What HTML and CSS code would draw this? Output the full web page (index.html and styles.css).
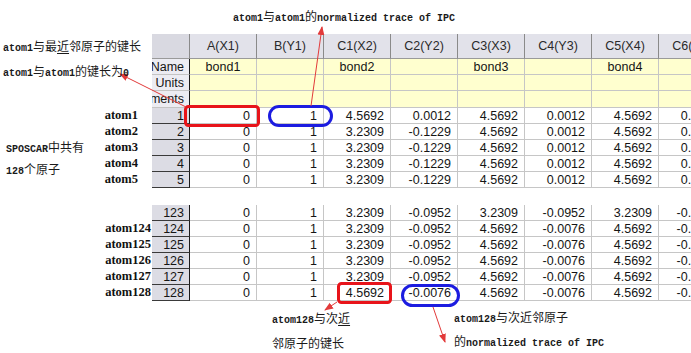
FILE: index.html
```html
<!DOCTYPE html>
<html lang="zh">
<head>
<meta charset="utf-8">
<title>atom bond table</title>
<link rel="stylesheet" href="styles.css">
</head>
<body>
<div class="page">
  <div class="sheet">
    <div class="grid grid1">
      <div class="lab"></div><div class="corner"></div>
      <div class="hd">A(X1)</div><div class="hd">B(Y1)</div><div class="hd">C1(X2)</div><div class="hd">C2(Y2)</div><div class="hd">C3(X3)</div><div class="hd">C4(Y3)</div><div class="hd">C5(X4)</div><div class="hd">C6(Y4)</div>

      <div class="lab"></div><div class="rh meta">Name</div>
      <div class="c y">bond1</div><div class="c y"></div><div class="c y">bond2</div><div class="c y"></div><div class="c y">bond3</div><div class="c y"></div><div class="c y">bond4</div><div class="c y"></div>

      <div class="lab"></div><div class="rh meta">Units</div>
      <div class="c y"></div><div class="c y"></div><div class="c y"></div><div class="c y"></div><div class="c y"></div><div class="c y"></div><div class="c y"></div><div class="c y"></div>

      <div class="lab"></div><div class="rh meta">Comments</div>
      <div class="c y"></div><div class="c y"></div><div class="c y"></div><div class="c y"></div><div class="c y"></div><div class="c y"></div><div class="c y"></div><div class="c y"></div>

      <div class="lab">atom1</div><div class="rh">1</div>
      <div class="c n">0</div><div class="c n">1</div><div class="c n">4.5692</div><div class="c n">0.0012</div><div class="c n">4.5692</div><div class="c n">0.0012</div><div class="c n">4.5692</div><div class="c n">0.0012</div>

      <div class="lab">atom2</div><div class="rh">2</div>
      <div class="c n">0</div><div class="c n">1</div><div class="c n">3.2309</div><div class="c n">-0.1229</div><div class="c n">4.5692</div><div class="c n">0.0012</div><div class="c n">4.5692</div><div class="c n">0.0012</div>

      <div class="lab">atom3</div><div class="rh">3</div>
      <div class="c n">0</div><div class="c n">1</div><div class="c n">3.2309</div><div class="c n">-0.1229</div><div class="c n">4.5692</div><div class="c n">0.0012</div><div class="c n">4.5692</div><div class="c n">0.0012</div>

      <div class="lab">atom4</div><div class="rh">4</div>
      <div class="c n">0</div><div class="c n">1</div><div class="c n">3.2309</div><div class="c n">-0.1229</div><div class="c n">4.5692</div><div class="c n">0.0012</div><div class="c n">4.5692</div><div class="c n">0.0012</div>

      <div class="lab">atom5</div><div class="rh">5</div>
      <div class="c n">0</div><div class="c n">1</div><div class="c n">3.2309</div><div class="c n">-0.1229</div><div class="c n">4.5692</div><div class="c n">0.0012</div><div class="c n">4.5692</div><div class="c n">0.0012</div>
    </div>

    <div class="grid grid2">
      <div class="lab lab2"></div><div class="rh">123</div>
      <div class="c n">0</div><div class="c n">1</div><div class="c n">3.2309</div><div class="c n">-0.0952</div><div class="c n">3.2309</div><div class="c n">-0.0952</div><div class="c n">3.2309</div><div class="c n">-0.0952</div>

      <div class="lab lab2">atom124</div><div class="rh">124</div>
      <div class="c n">0</div><div class="c n">1</div><div class="c n">3.2309</div><div class="c n">-0.0952</div><div class="c n">4.5692</div><div class="c n">-0.0076</div><div class="c n">4.5692</div><div class="c n">-0.0076</div>

      <div class="lab lab2">atom125</div><div class="rh">125</div>
      <div class="c n">0</div><div class="c n">1</div><div class="c n">3.2309</div><div class="c n">-0.0952</div><div class="c n">4.5692</div><div class="c n">-0.0076</div><div class="c n">4.5692</div><div class="c n">-0.0076</div>

      <div class="lab lab2">atom126</div><div class="rh">126</div>
      <div class="c n">0</div><div class="c n">1</div><div class="c n">3.2309</div><div class="c n">-0.0952</div><div class="c n">4.5692</div><div class="c n">-0.0076</div><div class="c n">4.5692</div><div class="c n">-0.0076</div>

      <div class="lab lab2">atom127</div><div class="rh">127</div>
      <div class="c n">0</div><div class="c n">1</div><div class="c n">3.2309</div><div class="c n">-0.0952</div><div class="c n">4.5692</div><div class="c n">-0.0076</div><div class="c n">4.5692</div><div class="c n">-0.0076</div>

      <div class="lab lab2">atom128</div><div class="rh">128</div>
      <div class="c n">0</div><div class="c n">1</div><div class="c n">4.5692</div><div class="c n">-0.0076</div><div class="c n">4.5692</div><div class="c n">-0.0076</div><div class="c n">4.5692</div><div class="c n">-0.0076</div>
    </div>
  </div>

  <svg class="marks" width="691" height="353" viewBox="0 0 691 353">
    <defs>
      <marker id="ah" markerWidth="9" markerHeight="8" refX="8" refY="4" orient="auto" markerUnits="userSpaceOnUse">
        <path d="M0,0.5 L9,4 L0,7.5 z" fill="#e23a3a"/>
      </marker>
    </defs>
    <rect x="185.5" y="106.5" width="73" height="19" rx="3" class="redbox"/>
    <rect x="269.5" y="106.5" width="62" height="19" rx="9.5" class="bluebox"/>
    <rect x="338.5" y="283.5" width="52" height="19" rx="3" class="redbox"/>
    <rect x="402.5" y="285.5" width="56" height="20" rx="10" class="bluebox"/>
    <line x1="186" y1="107" x2="120" y2="74" class="arrow"/>
    <line x1="311" y1="106" x2="322" y2="27" class="arrow"/>
    <line x1="337" y1="302" x2="325" y2="310" class="arrow"/>
    <line x1="433" y1="307" x2="445" y2="342" class="arrow"/>
  </svg>

  <div class="note note-top"><span class="l">atom1</span>与<span class="l">atom1</span>的<span class="l">normalized trace of IPC</span></div>
  <div class="note note-left">
    <div><span class="l">atom1</span>与最<u>近</u>邻原子的键长</div>
    <div><span class="l">atom1</span>与<span class="l">atom1</span>的键长为<span class="l">0</span></div>
  </div>
  <div class="note note-count">
    <div><span class="l">SPOSCAR</span>中共有</div>
    <div><span class="l">128</span>个原子</div>
  </div>
  <div class="note note-bl">
    <div><span class="l">atom128</span>与次<u>近</u></div>
    <div>邻原子的键长</div>
  </div>
  <div class="note note-br">
    <div><span class="l">atom128</span>与次近邻原子</div>
    <div>的<span class="l">normalized trace of IPC</span></div>
  </div>
</div>
</body>
</html>
```

FILE: styles.css
```css
html, body {
  margin: 0;
  padding: 0;
  background: #ffffff;
  overflow: hidden;
}

.page {
  position: relative;
  width: 691px;
  height: 353px;
  overflow: hidden;
  background: #ffffff;
}

.sheet {
  padding-top: 34px;
}

.grid {
  display: grid;
  grid-template-columns: 152px 38px repeat(8, 67px);
  grid-auto-rows: 16px;
  font-family: "Liberation Sans", Arial, sans-serif;
  font-size: 12.5px;
  color: #151515;
}

.grid1 {
  grid-template-rows: 25px 16px 16px 17px repeat(5, 16px);
}

.grid2 {
  margin-top: 17px;
}

.grid > div {
  box-sizing: border-box;
  white-space: nowrap;
  overflow: hidden;
  display: flex;
  align-items: center;
}

.lab {
  justify-content: flex-end;
  padding-right: 14px;
  font-family: "Liberation Serif", "Times New Roman", serif;
  font-weight: bold;
  font-size: 12.5px;
  color: #111;
  padding-bottom: 2px;
}

.lab2 {
  padding-right: 1px;
}

.corner {
  background: #d9d9e1;
  border-right: 1px solid #8a8a8a;
  border-bottom: 1px solid #9a9a9a;
}

.hd {
  background: #e2e2ea;
  border-right: 1px solid #8a8a8a;
  border-bottom: 1px solid #9a9a9a;
  justify-content: center;
  color: #2a2a2a;
  font-size: 12.5px;
}

.rh {
  background: #dcdce4;
  border-right: 1px solid #1a1a1a;
  border-bottom: 1px solid #3a3a3a;
  justify-content: flex-end;
  padding-right: 5px;
}

.rh.meta {
  background: #ececf2;
  border-bottom: 1px solid #c4c4c4;
}

.c {
  border-right: 1px solid #c6c6c6;
  border-bottom: 1px solid #c6c6c6;
}

.c.y {
  background: #ffffcf;
  justify-content: center;
}

.c.n {
  background: #ffffff;
  justify-content: flex-end;
  padding-right: 6px;
}

.marks {
  position: absolute;
  left: 0;
  top: 0;
  pointer-events: none;
}

.redbox {
  fill: none;
  stroke: #e8141a;
  stroke-width: 3;
}

.bluebox {
  fill: none;
  stroke: #1c1ce0;
  stroke-width: 3;
}

.arrow {
  stroke: #e23a3a;
  stroke-width: 1;
  marker-end: url(#ah);
}

.note {
  position: absolute;
  font-family: "Noto Sans CJK SC", sans-serif;
  font-size: 12px;
  color: #1a1a1a;
  white-space: nowrap;
}

.note .l {
  font-family: "Liberation Mono", "Courier New", monospace;
  font-size: 10px;
  font-weight: bold;
}

.note u {
  text-decoration: underline;
  text-underline-offset: 2px;
}

.note-top {
  left: 233px;
  top: 8px;
  line-height: 16px;
}

.note-left {
  left: 3px;
  top: 35px;
  line-height: 22px;
}

.note-count {
  left: 6px;
  top: 137px;
  line-height: 19px;
}

.note-bl {
  left: 272px;
  top: 307px;
  line-height: 22px;
}

.note-br {
  left: 454px;
  top: 306px;
  line-height: 21px;
}
```
